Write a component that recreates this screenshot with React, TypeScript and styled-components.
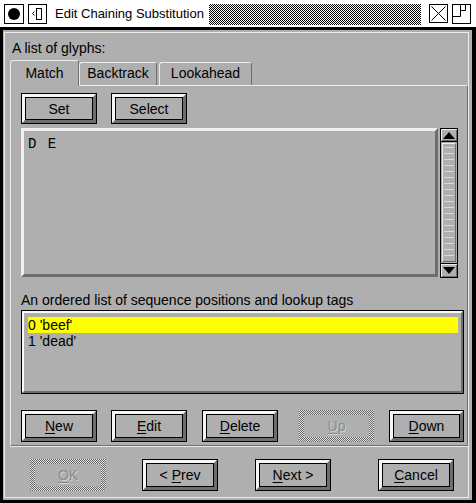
import React from 'react';
import styled, { createGlobalStyle, css } from 'styled-components';

const BG = '#afafaf';
const LIGHT = '#ececec';
const DARK = '#6e6e6e';

const GlobalStyle = createGlobalStyle`
  html, body { margin: 0; padding: 0; background: ${BG}; }
  body { font-family: "Liberation Sans", Arial, Helvetica, sans-serif; font-size: 14px; color: #000; }
  * { box-sizing: border-box; }
`;

const stipple = (a: string, b: string) => css`
  background-color: ${a};
  background-image: repeating-conic-gradient(${a} 0 25%, ${b} 0 50%);
  background-size: 2px 2px;
`;

const Window = styled.div`
  width: 476px;
  height: 503px;
  display: flex;
  flex-direction: column;
  background: ${BG};
  overflow: hidden;
`;

const TitleBar = styled.div`
  height: 27px;
  flex: none;
  background: #fff;
  display: flex;
  align-items: flex-start;
  padding: 4px 5px 0 4px;
`;

const TitleBox = styled.div<{ $w?: number; $h?: number; $ml?: number }>`
  width: ${(p) => p.$w ?? 20}px;
  height: ${(p) => p.$h ?? 20}px;
  margin-left: ${(p) => p.$ml ?? 0}px;
  border: 1px solid #000;
  background: #fff;
  flex: none;
  display: flex;
  align-items: center;
  justify-content: center;
`;

const Dot = styled.div`
  width: 12px;
  height: 12px;
  border-radius: 50%;
  background: #000;
`;

const TitleText = styled.div`
  font-size: 13px;
  line-height: 20px;
  margin-left: 8px;
  white-space: nowrap;
  flex: none;
`;

const Stipple = styled.div`
  flex: 1;
  height: 21px;
  margin: 0 8px 0 5px;
  ${stipple('#000', '#fff')}
`;

const Body = styled.div`
  flex: 1;
  border: 3px solid #000;
  border-right-width: 4px;
  display: flex;
  flex-direction: column;
  min-height: 0;
`;

const Frame = styled.div`
  flex: 1;
  margin: 2px 3px 2px 1px;
  border: 1px solid ${LIGHT};
  display: flex;
  flex-direction: column;
`;

const Label = styled.div<{ $mt: number; $ml: number }>`
  margin-top: ${(p) => p.$mt}px;
  margin-left: ${(p) => p.$ml}px;
  line-height: 16px;
  height: 16px;
  white-space: nowrap;
`;

const TabRow = styled.div`
  display: flex;
  align-items: flex-end;
  margin: 4px 0 0 5px;
  height: 25px;
`;

const Tab = styled.div<{ $w: number; $active?: boolean; $ml?: number }>`
  width: ${(p) => p.$w}px;
  margin-left: ${(p) => p.$ml ?? 0}px;
  height: ${(p) => (p.$active ? 26 : 23)}px;
  margin-bottom: ${(p) => (p.$active ? -1 : 0)}px;
  padding-top: ${(p) => (p.$active ? 4 : 2)}px;
  line-height: 16px;
  text-align: center;
  background: ${BG};
  border-top: 1px solid ${LIGHT};
  border-left: 1px solid ${LIGHT};
  border-right: 1px solid ${DARK};
  border-radius: 3px 3px 0 0;
  position: relative;
  z-index: ${(p) => (p.$active ? 2 : 0)};
  flex: none;
`;

const Panel = styled.div`
  margin-left: 5px;
  border: 1px solid;
  border-color: ${LIGHT} ${DARK} ${DARK} ${LIGHT};
  box-shadow: 0 1px 0 ${LIGHT};
  padding: 7px 0 3px 10px;
  display: flex;
  flex-direction: column;
`;

const Row = styled.div<{ $mt?: number; $ml?: number }>`
  display: flex;
  margin-top: ${(p) => p.$mt ?? 0}px;
  margin-left: ${(p) => p.$ml ?? 0}px;
`;

const BtnFrame = styled.div<{ $w: number; $h: number; $ml: number }>`
  width: ${(p) => p.$w}px;
  height: ${(p) => p.$h}px;
  margin-left: ${(p) => p.$ml}px;
  border: 1px solid #000;
  flex: none;
  display: flex;
`;

const BtnBevel = styled.div`
  flex: 1;
  display: flex;
  border: 3px solid;
  border-color: #f6f6f6 ${DARK} ${DARK} #f6f6f6;
`;

const BtnFace = styled.div`
  flex: 1;
  border: 1px solid #000;
  display: flex;
  align-items: center;
  justify-content: center;
  line-height: 16px;
  white-space: pre;
  u { text-underline-offset: 2px; }
`;

const DisabledFrame = styled.div<{ $w: number; $h: number; $ml: number }>`
  width: ${(p) => p.$w}px;
  height: ${(p) => p.$h}px;
  margin-left: ${(p) => p.$ml}px;
  padding: 5px;
  flex: none;
  display: flex;
  ${stipple('#666666', '#e2e2e2')}
`;

const DisabledFace = styled.div`
  flex: 1;
  background: ${BG};
  display: flex;
  align-items: center;
  justify-content: center;
  line-height: 16px;
  color: #8a8a8a;
  text-shadow: 1px 1px 0 #d2d2d2;
  u { text-underline-offset: 2px; }
`;

const GlyphRow = styled.div`
  display: flex;
  margin-top: 4px;
  height: 150px;
`;

const GlyphBox = styled.div`
  width: 417px;
  height: 149px;
  border: 3px solid;
  border-color: #f0f0f0 ${DARK} ${DARK} #f0f0f0;
  padding: 5px 0 0 4px;
  font-family: "Liberation Mono", "Courier New", monospace;
  font-size: 14px;
  line-height: 16px;
  word-spacing: 3px;
`;

const ScrollBar = styled.div`
  width: 18px;
  margin-left: 2px;
  border: 1px solid #000;
  display: flex;
  flex-direction: column;
  background: ${BG};
`;

const Arrow = styled.div<{ $down?: boolean }>`
  height: ${(p) => (p.$down ? 14 : 13)}px;
  flex: none;
  display: flex;
  align-items: center;
  justify-content: center;
  ${(p) => (p.$down ? `border-top: 1px solid #000;` : `border-bottom: 1px solid #000;`)}
  box-shadow: inset 1px 1px 0 ${LIGHT}, inset -1px -1px 0 ${DARK};
`;

const Thumb = styled.div`
  flex: 1;
  margin: 1px;
  border: 1px solid;
  border-color: ${LIGHT} ${DARK} ${DARK} ${LIGHT};
  padding: 0 1px;
  background-clip: content-box;
  background-image: repeating-linear-gradient(
    to bottom,
    transparent 0 3px,
    #dadada 3px 4px,
    transparent 4px 6px
  );
`;

const ListBox = styled.div`
  margin-top: 2px;
  width: 443px;
  height: 84px;
  border: 1px solid #000;
  display: flex;
`;

const ListInner = styled.div`
  flex: 1;
  border: 2px solid;
  border-color: #fafafa ${DARK} ${DARK} #fafafa;
  padding: 4px 3px 0 4px;
  display: flex;
  flex-direction: column;
`;

const ListItem = styled.div<{ $sel?: boolean }>`
  height: 16px;
  line-height: 16px;
  background: ${(p) => (p.$sel ? '#ffff00' : 'transparent')};
  white-space: nowrap;
`;

type BtnProps = { w?: number; h?: number; ml?: number; disabled?: boolean; children: React.ReactNode };

const Button = ({ w = 76, h = 32, ml = 0, disabled, children }: BtnProps) =>
  disabled ? (
    <DisabledFrame $w={w} $h={h} $ml={ml}>
      <DisabledFace>{children}</DisabledFace>
    </DisabledFrame>
  ) : (
    <BtnFrame $w={w} $h={h} $ml={ml}>
      <BtnBevel>
        <BtnFace>{children}</BtnFace>
      </BtnBevel>
    </BtnFrame>
  );

export default function App() {
  return (
    <>
      <GlobalStyle />
      <Window>
        <TitleBar>
          <TitleBox>
            <Dot />
          </TitleBox>
          <TitleBox $w={19} $ml={4}>
            <svg width="17" height="18" viewBox="0 0 17 18">
              <polyline points="5.5,6.5 3.5,8.5 5.5,10.5" fill="none" stroke="#000" strokeWidth="1" />
              <rect x="7.5" y="3.5" width="5" height="11" fill="none" stroke="#000" strokeWidth="1" />
            </svg>
          </TitleBox>
          <TitleText>Edit Chaining Substitution</TitleText>
          <Stipple />
          <TitleBox $w={19} $h={19}>
            <svg width="17" height="17" viewBox="0 0 17 17">
              <line x1="1.5" y1="1.5" x2="15.5" y2="15.5" stroke="#000" strokeWidth="1" />
              <line x1="15.5" y1="1.5" x2="1.5" y2="15.5" stroke="#000" strokeWidth="1" />
            </svg>
          </TitleBox>
          <TitleBox $w={19} $h={20} $ml={4}>
            <svg width="17" height="18" viewBox="0 0 17 18">
              <polyline points="7.5,0 7.5,11.5 0,11.5" fill="none" stroke="#000" strokeWidth="1" />
              <polyline points="7.5,5.5 12.5,5.5 12.5,0" fill="none" stroke="#000" strokeWidth="1" />
            </svg>
          </TitleBox>
        </TitleBar>
        <Body>
          <Frame>
            <Label $mt={7} $ml={7}>A list of glyphs:</Label>
            <TabRow>
              <Tab $w={69} $active>Match</Tab>
              <Tab $w={78}>Backtrack</Tab>
              <Tab $w={93} $ml={2}>Lookahead</Tab>
            </TabRow>
            <Panel>
              <Row>
                <Button h={31}>Set</Button>
                <Button h={31} ml={14}>Select</Button>
              </Row>
              <GlyphRow>
                <GlyphBox>D E</GlyphBox>
                <ScrollBar>
                  <Arrow>
                    <svg width="12" height="7" viewBox="0 0 12 7">
                      <polygon points="6,0 12,7 0,7" fill="#000" />
                    </svg>
                  </Arrow>
                  <Thumb />
                  <Arrow $down>
                    <svg width="12" height="7" viewBox="0 0 12 7">
                      <polygon points="0,0 12,0 6,7" fill="#000" />
                    </svg>
                  </Arrow>
                </ScrollBar>
              </GlyphRow>
              <Label $mt={14} $ml={0}>An ordered list of sequence positions and lookup tags</Label>
              <ListBox>
                <ListInner>
                  <ListItem $sel>0 'beef'</ListItem>
                  <ListItem>1 'dead'</ListItem>
                </ListInner>
              </ListBox>
              <Row $mt={16}>
                <Button><u>N</u>ew</Button>
                <Button ml={14}><u>E</u>dit</Button>
                <Button ml={15}><u>D</u>elete</Button>
                <Button w={75} ml={21} disabled><u>U</u>p</Button>
                <Button w={75} ml={15}><u>D</u>own</Button>
              </Row>
            </Panel>
            <Row $mt={13} $ml={25}>
              <Button disabled><u>O</u>K</Button>
              <Button ml={36}>{'< '}<u>P</u>rev</Button>
              <Button ml={37}><u>N</u>ext{' >'}</Button>
              <Button ml={47}><u>C</u>ancel</Button>
            </Row>
          </Frame>
        </Body>
      </Window>
    </>
  );
}
